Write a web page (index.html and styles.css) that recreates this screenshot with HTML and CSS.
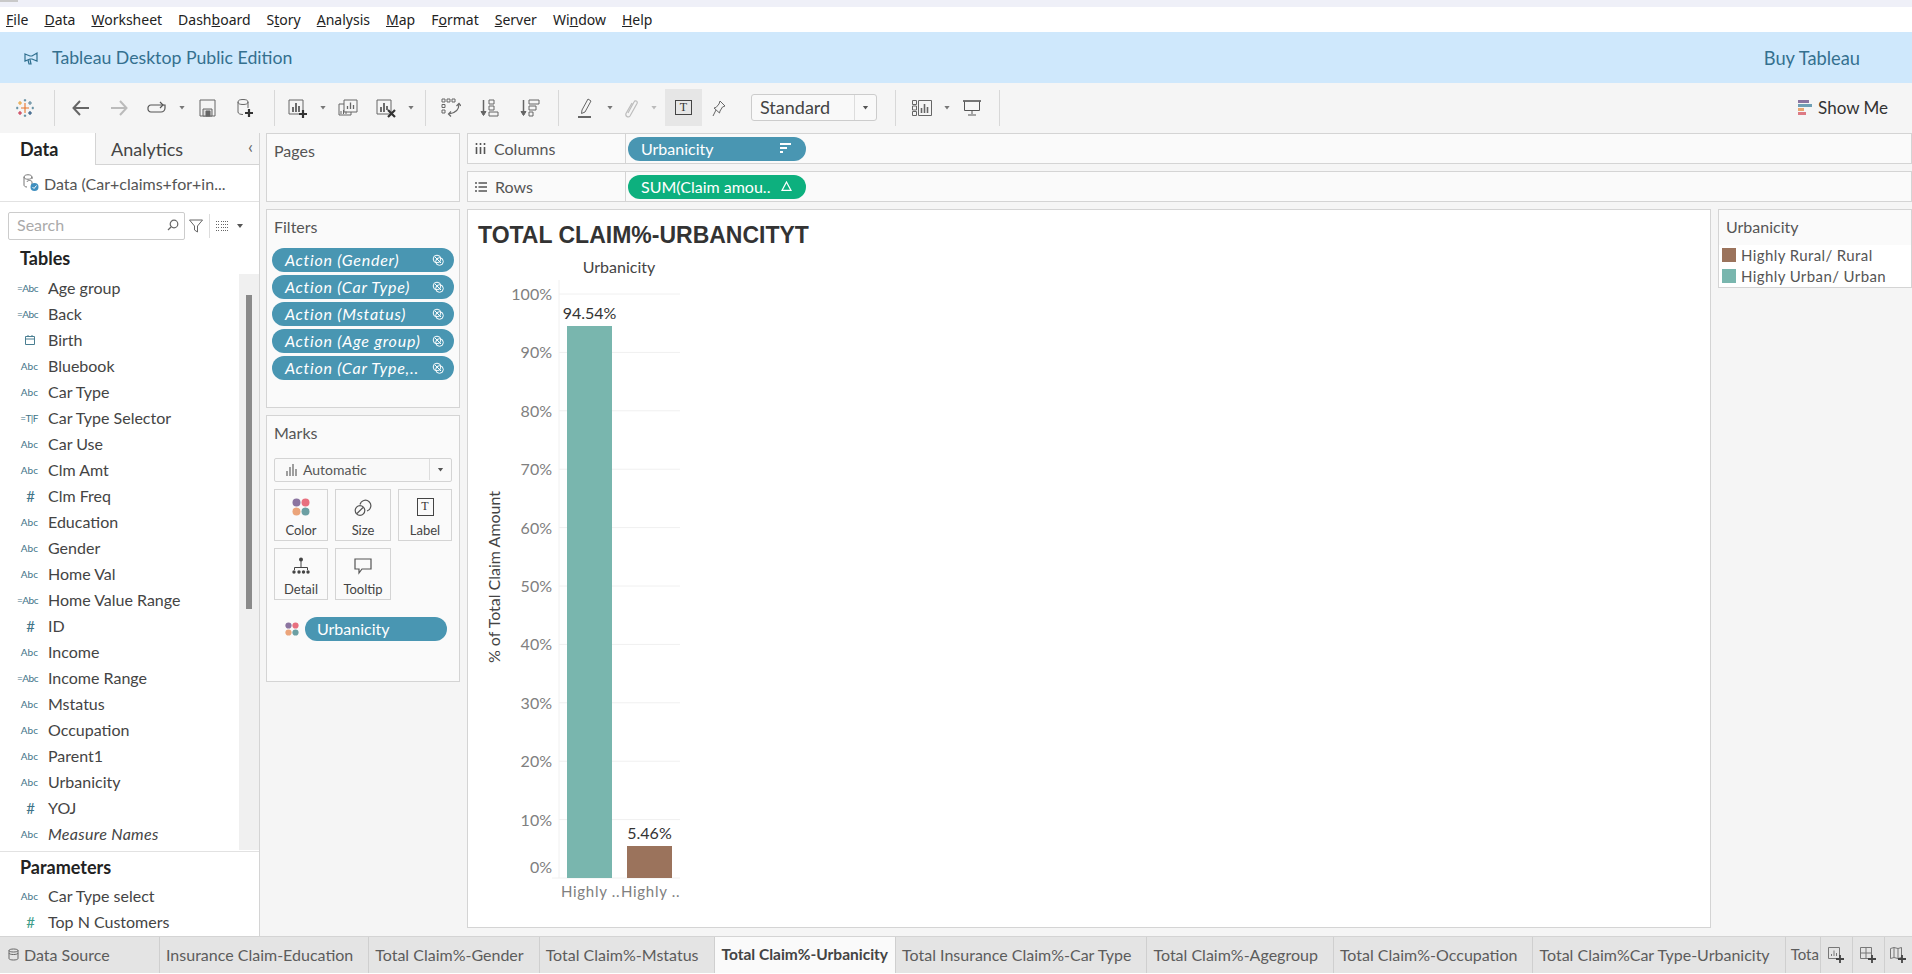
FILE: index.html
```html
<!DOCTYPE html>
<html>
  <head>
    <meta charset="UTF-8" />
    <title>Tableau Desktop Public Edition</title>
    <link rel="stylesheet" href="styles.css">
  </head>
  <body>
    <div class="top-strip"><span class="strip-block"></span></div>

    <!-- Menu -->
    <nav class="menu">
      <span><u>F</u>ile</span>
      <span><u>D</u>ata</span>
      <span><u>W</u>orksheet</span>
      <span>Dash<u>b</u>oard</span>
      <span>S<u>t</u>ory</span>
      <span><u>A</u>nalysis</span>
      <span><u>M</u>ap</span>
      <span>F<u>o</u>rmat</span>
      <span><u>S</u>erver</span>
      <span>Wi<u>n</u>dow</span>
      <span><u>H</u>elp</span>
    </nav>

    <!-- Banner -->
    <div class="banner">
      <svg class="megaphone" width="14" height="14" viewBox="0 0 14 14" fill="none" stroke="#2f6f8f" stroke-width="1.200"><path d="M1 3l5 2h2l5-3v8L8 8H6L1 10z"/><path d="M4 9l1 4h2L6 8.500"/></svg>
      <span>Tableau Desktop Public Edition</span>
      <span class="buy">Buy Tableau</span>
    </div>

    <!-- Toolbar -->
    <div class="toolbar">
      <div class="tool">
        <svg width="20" height="20" viewBox="0 0 20 20" fill="none" stroke-width="1.100">
          <path d="M10 5v10M6 10h8" stroke="#e8762b"/>
          <path d="M5 3v4M3 5h4" stroke="#e9a23b"/>
          <path d="M15 3v4M13 5h4" stroke="#5b879b"/>
          <path d="M5 13v4M3 15h4" stroke="#c72e4a"/>
          <path d="M15 13v4M13 15h4" stroke="#1f4e79"/>
          <path d="M10 1v2.400M8.800 2.200h2.400M10 16.600V19M8.800 17.800h2.400M1 10h2.400M2.200 8.800v2.400M16.600 10H19M17.800 8.800v2.400" stroke="#59879b"/>
        </svg>
      </div>
      <i class="sep sep-first"></i>
      <div class="tool"><svg width="20" height="18" viewBox="0 0 20 18" fill="none" stroke="#666" stroke-width="2"><path d="M18 9H3M9 2L2.500 9 9 16"/></svg></div>
      <div class="tool"><svg width="20" height="18" viewBox="0 0 20 18" fill="none" stroke="#bbb" stroke-width="2"><path d="M2 9h15M11 2l6.500 7L11 16"/></svg></div>
      <div class="tool"><svg width="20" height="14" viewBox="0 0 20 14" fill="none" stroke="#555" stroke-width="1.200"><path d="M4 4h14v3a4 4 0 0 1-4 4H4a3 3 0 0 1-3-3.500A3 3 0 0 1 4 4z"/><path d="M13 1l3 3-3 3"/></svg></div>
      <b class="caret"></b>
      <div class="tool"><svg width="17" height="18" viewBox="0 0 17 18" fill="none" stroke="#666"><path d="M1 1h15v16H1z"/><path d="M4 10h9v7H4z" fill="#ddd"/><path d="M7 12h4v5H7z" fill="#666"/></svg></div>
      <div class="tool"><svg width="18" height="20" viewBox="0 0 18 20" fill="none" stroke="#666"><path d="M2 4v10c0 1.500 2 2.500 5 2.500M12 4v6"/><ellipse cx="7" cy="4" rx="5" ry="2.500"/><path d="M13 11v8M9 15h8" stroke="#333" stroke-width="2.200"/></svg></div>
      <i class="sep sep-a"></i>
      <div class="tool"><svg width="20" height="20" viewBox="0 0 20 20" fill="none"><path d="M1 2h14v14H1z" stroke="#666"/><path d="M5 9v5M8 5v9M11 8v6" stroke="#555" stroke-width="1.700"/><path d="M15 12v8M11 16h8" stroke="#333" stroke-width="2.200"/></svg></div>
      <b class="caret"></b>
      <div class="tool"><svg width="20" height="18" viewBox="0 0 20 18" fill="none" stroke="#666"><path d="M6 5H1v11h12v-3"/><path d="M6 1h13v12H6z"/><path d="M9.500 10V7M12.500 10V3.500M15.500 10V6" stroke-width="1.300"/><path d="M3 15v-3M5.500 15v-4M8 15v-2.500" stroke-width="1"/></svg></div>
      <div class="tool"><svg width="20" height="20" viewBox="0 0 20 20" fill="none"><path d="M1 2h14v14H1z" stroke="#666"/><path d="M5 9v5M8 5v9M11 8v4" stroke="#555" stroke-width="1.700"/><path d="M12 12l7 7M19 12l-7 7" stroke="#333" stroke-width="2.200"/></svg></div>
      <b class="caret"></b>
      <i class="sep sep-b"></i>
      <div class="tool"><svg width="20" height="20" viewBox="0 0 20 20" fill="none" stroke="#666"><path d="M1 1h3v3H1zM6 1h3v3H6zM11 1h3v3h-3zM1 6.500h3v3H1zM1 12h3v3H1z"/><path d="M18 6c0 5-3 9-10 10" stroke-width="1.200"/><path d="M15.500 8L18 5.500 20 8M10 13.500L7.500 16l2.500 2.500" stroke-width="1.200"/></svg></div>
      <div class="tool tool-sort"><svg width="20" height="20" viewBox="0 0 20 20" fill="none" stroke="#666"><path d="M3.500 2v15" stroke-width="1.500"/><path d="M1 13.500l2.500 4 2.500-4z" fill="#666"/><path d="M9 2h5v4H9zM9 8h5v4H9zM9 14h9v4H9z"/></svg></div>
      <div class="tool tool-sort-desc"><svg width="20" height="20" viewBox="0 0 20 20" fill="none" stroke="#666"><path d="M3.500 2v15" stroke-width="1.500"/><path d="M1 13.500l2.500 4 2.500-4z" fill="#666"/><path d="M9 2h10v4H9zM9 8h7v4H9zM9 14h4v4H9z"/></svg></div>
      <i class="sep sep-c"></i>
      <div class="tool"><svg width="16" height="20" viewBox="0 0 16 20" fill="none" stroke="#666"><path d="M5 12l6-11 3 2-6 11-3.500 1.500z"/><path d="M1 19h13" stroke-width="2"/></svg></div>
      <b class="caret"></b>
      <div class="tool tool-clip"><svg width="14" height="20" viewBox="0 0 14 20" fill="none" stroke="#bdbdbd" stroke-width="1.200"><path d="M4 15l6-11c1-2 4-1 3 1.500L6 18c-1.500 2-5 .5-4-2.500L8 5"/></svg></div>
      <b class="caret caret-off"></b>
      <div class="tool tool-label">
        <span class="t-box">T</span>
      </div>
      <div class="tool tool-pin"><svg width="14" height="18" viewBox="0 0 14 18" fill="none" stroke="#666"><path d="M8 1l5 5-2.500 1L8 11 7.500 13 2 8l2-.5L7 4z" transform="translate(0 1)"/><path d="M4 11l-3 6"/></svg></div>
      <div class="fit-select">
        <span class="fit-value">Standard</span>
        <span class="fit-arrow"><b class="caret caret-dark"></b></span>
      </div>
      <i class="sep sep-d"></i>
      <div class="tool"><svg width="20" height="16" viewBox="0 0 20 16" fill="none" stroke="#666"><path d="M.5.500h4v4h-4zM.5 6h4v4h-4zM.5 11.500h4v4h-4zM6.500.5h13v15h-13z"/><path d="M9.500 13V8M12.500 13V4M15.500 13V7" stroke-width="1.600"/></svg></div>
      <b class="caret"></b>
      <div class="tool"><svg width="18" height="16" viewBox="0 0 18 16" fill="none" stroke="#555"><path d="M0 1h18" stroke-width="1.600"/><path d="M1.500 1.500v9h15v-9M9 10.500V14M5 15h8"/></svg></div>
      <i class="sep sep-e"></i>
      <div class="show-me">
        <svg width="14" height="15" viewBox="0 0 14 15"><rect width="11" height="3" fill="#8b74a0"/><rect y="4" width="14" height="3" fill="#6f9fb5"/><rect y="8" width="6" height="3" fill="#e7a671"/><rect y="12" width="8" height="3" fill="#dd7a84"/></svg>
        <span>Show Me</span>
      </div>
    </div>

    <div class="workspace">
      <!-- Data pane -->
      <aside class="data-pane">
        <div class="pane-tabs">
          <span class="pane-tab active">Data</span>
          <span class="pane-tab">Analytics<em class="collapse">‹</em></span>
        </div>
        <div class="source">
          <svg width="17" height="18" viewBox="0 0 17 18" fill="none" stroke="#777"><path d="M2 3c0-3 8-3 8 0s-8 3-8 0zM2 3v8c0 1 1 2 3 2M10 3v2M5 8c0-2 5-2 5 0v6"/><circle cx="12.500" cy="13" r="4" fill="#3f8fbf" stroke="none"/><path d="M10.500 13l1.500 1.500 2.500-3" stroke="#fff"/></svg>
          <span>Data (Car+claims+for+in...</span>
        </div>
        <div class="search-row">
          <div class="search-box">
            <span>Search</span>
            <svg width="12" height="12" viewBox="0 0 12 12" fill="none" stroke="#666" stroke-width="1.200"><circle cx="7" cy="5" r="3.800"/><path d="M4 8l-3 3"/></svg>
          </div>
          <svg class="funnel" width="14" height="14" viewBox="0 0 14 14" fill="none" stroke="#666"><path d="M.5 1h13L8.500 7v6l-3-2V7z"/></svg>
          <i class="search-sep"></i>
          <svg class="view-icon" width="13" height="10" viewBox="0 0 13 10" stroke="#666"><path d="M0 .5h4M5 .5h8M0 3.500h4M5 3.500h8M0 6.500h4M5 6.500h8M0 9.500h4M5 9.500h8" stroke-dasharray="1 1"/></svg>
          <b class="caret caret-dark"></b>
        </div>
        <h3 class="pane-heading">Tables</h3>
        <div class="fields-wrap">
          <ul class="fields">
            <li><b class="calc">=Abc</b>Age group</li>
            <li><b class="calc">=Abc</b>Back</li>
            <li><b class="cal"><svg width="10" height="10" viewBox="0 0 10 10" fill="none" stroke="#4a7f92"><path d="M.5 1.500h9v8h-9zM.5 4h9M3 0v2M7 0v2"/></svg></b>Birth</li>
            <li><b>Abc</b>Bluebook</li>
            <li><b>Abc</b>Car Type</li>
            <li><b class="calc">=T|F</b>Car Type Selector</li>
            <li><b>Abc</b>Car Use</li>
            <li><b>Abc</b>Clm Amt</li>
            <li><b class="num">#</b>Clm Freq</li>
            <li><b>Abc</b>Education</li>
            <li><b>Abc</b>Gender</li>
            <li><b>Abc</b>Home Val</li>
            <li><b class="calc">=Abc</b>Home Value Range</li>
            <li><b class="num">#</b>ID</li>
            <li><b>Abc</b>Income</li>
            <li><b class="calc">=Abc</b>Income Range</li>
            <li><b>Abc</b>Mstatus</li>
            <li><b>Abc</b>Occupation</li>
            <li><b>Abc</b>Parent1</li>
            <li><b>Abc</b>Urbanicity</li>
            <li><b class="num">#</b>YOJ</li>
            <li class="generated"><b>Abc</b>Measure Names</li>
          </ul>
          <div class="scroll-track"><div class="scroll-thumb"></div></div>
        </div>
        <h3 class="pane-heading params">Parameters</h3>
        <ul class="fields">
          <li><b>Abc</b>Car Type select</li>
          <li><b class="num green">#</b>Top N Customers</li>
        </ul>
      </aside>

      <!-- Pages, filters, marks -->
      <div class="cards">
        <section class="card pages"><h4>Pages</h4></section>
        <section class="card filters">
          <h4>Filters</h4>
          <div class="pill-stack">
            <div class="pill action">Action (Gender)<svg class="link" viewBox="0 0 12 12"><use href="#link"/></svg></div>
            <div class="pill action">Action (Car Type)<svg class="link" viewBox="0 0 12 12"><use href="#link"/></svg></div>
            <div class="pill action">Action (Mstatus)<svg class="link" viewBox="0 0 12 12"><use href="#link"/></svg></div>
            <div class="pill action">Action (Age group)<svg class="link" viewBox="0 0 12 12"><use href="#link"/></svg></div>
            <div class="pill action">Action (Car Type,..<svg class="link" viewBox="0 0 12 12"><use href="#link"/></svg></div>
          </div>
        </section>
        <section class="card marks">
          <h4>Marks</h4>
          <div class="mark-select">
            <span class="mark-type">
              <svg width="12" height="12" viewBox="0 0 12 12" stroke="#555" stroke-width="1.100"><path d="M1 12V7M4 12V3M7 12V0M10 12V5"/></svg>
              Automatic
            </span>
            <span class="mark-arrow"><b class="caret caret-dark"></b></span>
          </div>
          <div class="mark-grid">
            <div class="mark-btn">
              <svg width="18" height="18" viewBox="0 0 18 18"><circle cx="4.500" cy="4.500" r="4" fill="#8b74a0"/><circle cx="13.500" cy="4.500" r="4" fill="#e8707f"/><circle cx="4.500" cy="13.500" r="4" fill="#eba47a"/><circle cx="13.500" cy="13.500" r="4" fill="#6b9fa3"/></svg>
              <span>Color</span>
            </div>
            <div class="mark-btn">
              <svg width="18" height="18" viewBox="0 0 18 18" fill="none" stroke="#555" stroke-width="1.200"><circle cx="6" cy="12.500" r="4.800"/><path d="M3 15.500l6-6M6 6.500A5.500 5.500 0 1 1 13 13"/></svg>
              <span>Size</span>
            </div>
            <div class="mark-btn">
              <span class="t-box t-big">T</span>
              <span>Label</span>
            </div>
            <div class="mark-btn">
              <svg width="18" height="18" viewBox="0 0 18 18" fill="#444" stroke="#444"><circle cx="9" cy="2.500" r="2" stroke="none"/><path d="M9 3v7M2.500 13v-2.500h13V13" fill="none"/><circle cx="2" cy="15" r="1.700" stroke="none"/><circle cx="7" cy="15" r="1.700" stroke="none"/><circle cx="11.500" cy="15" r="1.700" stroke="none"/><circle cx="16" cy="15" r="1.700" stroke="none"/></svg>
              <span>Detail</span>
            </div>
            <div class="mark-btn">
              <svg width="18" height="16" viewBox="0 0 18 16" fill="none" stroke="#555" stroke-width="1.200"><path d="M1 1h16v10H8l-3 4v-4H1z"/></svg>
              <span>Tooltip</span>
            </div>
          </div>
          <div class="mark-row">
            <svg width="14" height="14" viewBox="0 0 18 18"><circle cx="4.500" cy="4.500" r="4" fill="#8b74a0"/><circle cx="13.500" cy="4.500" r="4" fill="#e8707f"/><circle cx="4.500" cy="13.500" r="4" fill="#eba47a"/><circle cx="13.500" cy="13.500" r="4" fill="#6b9fa3"/></svg>
            <div class="pill mark-pill">Urbanicity</div>
          </div>
        </section>
      </div>

      <!-- Shelves and view -->
      <div class="view-col">
        <div class="shelf">
          <div class="shelf-label">
            <svg width="11" height="11" viewBox="0 0 11 11" stroke="#555" stroke-width="1.600"><path d="M1.500 4v7M5.500 4v7M9.500 4v7M1.500 0v2M5.500 0v2M9.500 0v2"/></svg>
            Columns
          </div>
          <div class="pill dim">Urbanicity
            <svg width="12" height="10" viewBox="0 0 12 10" stroke="#fff" stroke-width="1.800"><path d="M0 1h11M0 5h7M0 9h3"/></svg>
          </div>
        </div>
        <div class="shelf">
          <div class="shelf-label">
            <svg width="12" height="10" viewBox="0 0 12 10" stroke="#555" stroke-width="1.400"><path d="M0 1h2M3.500 1H12M0 5h2M3.500 5H12M0 9h2M3.500 9H12"/></svg>
            Rows
          </div>
          <div class="pill measure">SUM(Claim amou..
            <svg width="11" height="10" viewBox="0 0 11 10" fill="none" stroke="#fff" stroke-width="1.200"><path d="M5.500 1L10 9.400H1z"/></svg>
          </div>
        </div>
        <div class="view-row">
          <div class="canvas">
            <h2 class="viz-title">TOTAL CLAIM%-URBANCITYT</h2>
            <svg class="chart" width="320" height="700" viewBox="467 210 320 700">
              <g class="grid-lines">
                <path d="M559 294H680M559 352.400H680M559 410.800H680M559 469.200H680M559 527.600H680M559 586H680M559 644.400H680M559 702.800H680M559 761.200H680M559 819.600H680M552 878H680M559 280V878"/>
              </g>
              <text class="col-head" x="619" y="273" text-anchor="middle">Urbanicity</text>
              <g class="axis" text-anchor="end">
                <text x="552" y="300">100%</text>
                <text x="552" y="358">90%</text>
                <text x="552" y="417">80%</text>
                <text x="552" y="475">70%</text>
                <text x="552" y="534">60%</text>
                <text x="552" y="592">50%</text>
                <text x="552" y="650">40%</text>
                <text x="552" y="709">30%</text>
                <text x="552" y="767">20%</text>
                <text x="552" y="826">10%</text>
                <text x="552" y="873">0%</text>
              </g>
              <text class="axis-title" transform="translate(500 577) rotate(-90)" text-anchor="middle">% of Total Claim Amount</text>
              <rect x="567" y="326" width="45" height="552" fill="#79b6ae"/>
              <rect x="627" y="846" width="45" height="32" fill="#9b735c"/>
              <text class="value" x="589.500" y="319" text-anchor="middle">94.54%</text>
              <text class="value" x="649.500" y="839" text-anchor="middle">5.46%</text>
              <text class="axis spaced" x="561" y="897">Highly ..</text>
              <text class="axis spaced" x="621" y="897">Highly ..</text>
            </svg>
          </div>
          <div class="legend">
            <div class="legend-head">Urbanicity</div>
            <div class="legend-item"><i class="swatch rural"></i>Highly Rural/ Rural</div>
            <div class="legend-item"><i class="swatch urban"></i>Highly Urban/ Urban</div>
          </div>
        </div>
      </div>
    </div>

    <!-- Sheet tabs -->
    <div class="sheet-tabs">
      <div class="sheet source-tab">
        <svg width="11" height="13" viewBox="0 0 11 13" fill="none" stroke="#666"><path d="M1 2.500v8c0 2 9 2 9 0v-8M1 2.500c0-2 9-2 9 0s-9 2-9 0zM1 5c0 2 9 2 9 0"/></svg>
        Data Source
      </div>
      <div class="sheet">Insurance Claim-Education</div>
      <div class="sheet">Total Claim%-Gender</div>
      <div class="sheet">Total Claim%-Mstatus</div>
      <div class="sheet current">Total Claim%-Urbanicity</div>
      <div class="sheet">Total Insurance Claim%-Car Type</div>
      <div class="sheet">Total Claim%-Agegroup</div>
      <div class="sheet">Total Claim%-Occupation</div>
      <div class="sheet">Total Claim%Car Type-Urbanicity</div>
      <div class="sheet clipped">Tota</div>
      <div class="sheet-add">
        <svg width="17" height="16" viewBox="0 0 17 16" fill="none"><path d="M.5.500h11v11H.5z" stroke="#777"/><path d="M3.500 9V7M6 9V3.500M8.500 9V6" stroke="#777"/><path d="M12 8v8M8 12h8" stroke="#444" stroke-width="1.800"/></svg>
      </div>
      <div class="sheet-add">
        <svg width="17" height="16" viewBox="0 0 17 16" fill="none"><path d="M.5.500h11v11H.5zM.5 6h11M6 .5v11" stroke="#777"/><path d="M12 8v8M8 12h8" stroke="#444" stroke-width="1.800"/></svg>
      </div>
      <div class="sheet-add">
        <svg width="17" height="16" viewBox="0 0 17 16" fill="none"><path d="M.5 1.500L4 .5l4 1 3.500-1v10l-3.500 1-4-1-3.500 1zM4 .5v10M8 1.500v10" stroke="#777"/><path d="M12 8v8M8 12h8" stroke="#444" stroke-width="1.800"/></svg>
      </div>
    </div>

    <svg class="defs" width="0" height="0">
      <symbol id="link" viewBox="0 0 12 12">
        <g fill="none" stroke="#fff" stroke-width="1"><circle cx="5" cy="5" r="3.800"/><circle cx="7.500" cy="7.500" r="3.800"/><path d="M3 3l6 6"/></g>
      </symbol>
    </svg>
  </body>
</html>
```

FILE: styles.css
```css
* {
  box-sizing: border-box;
}
body {
  margin: 0;
  width: 1912px;
  height: 974px;
  overflow: hidden;
  background: #f5f5f5;
  color: #444;
  font-family: Lato, sans-serif;
  font-size: 16px;
  display: flex;
  flex-direction: column;
}
h2,
h3,
h4,
ul {
  margin: 0;
  padding: 0;
}
.defs {
  position: absolute;
}

/* top of window */
.top-strip {
  height: 7px;
  background: #eff0f8;
}
.strip-block {
  display: block;
  width: 18px;
  height: 2px;
  background: #c9c9c9;
}
.menu {
  height: 25px;
  background: #fff;
  display: flex;
  gap: 16px;
  align-items: center;
  padding-left: 6px;
  color: #222;
  font-family: "Noto Sans", sans-serif;
  font-size: 14px;
}
.banner {
  height: 51px;
  background: #cfe8fc;
  color: #34708f;
  font-size: 17.700px;
  display: flex;
  align-items: center;
  padding-left: 24px;
}
.megaphone {
  margin-right: 14px;
}
.buy {
  margin-left: auto;
  margin-right: 52px;
  font-size: 18.300px;
}

/* toolbar */
.toolbar {
  height: 50px;
  padding: 0 0 1px 6px;
  display: flex;
  align-items: center;
}
.tool {
  width: 38px;
  height: 37px;
  display: flex;
  align-items: center;
  justify-content: center;
  flex: none;
}
.tool-sort {
  margin-left: 1px;
}
.tool-sort-desc {
  margin-left: 2px;
}
.tool-clip {
  width: 30px;
}
.tool-label {
  width: 37px;
  margin-left: 5px;
  background: #e6e6e6;
}
.tool-pin {
  width: 34px;
}
.caret {
  display: block;
  flex: none;
  width: 12px;
  height: 4px;
  background: #777;
  clip-path: polygon(3px 0, 9px 0, 6px 4px);
}
.caret-off {
  margin-left: 2px;
  background: #bbb;
}
.caret-dark {
  background: #555;
}
.sep {
  flex: none;
  display: block;
  width: 1px;
  height: 36px;
  background: #d8d8d8;
}
.sep-first {
  margin: 0 7px 0 10px;
}
.sep-a {
  margin: 0 4px 0 10px;
}
.sep-b {
  margin: 0 6px 0 8px;
}
.sep-c {
  margin: 0 7px 0 9px;
}
.sep-d {
  margin: 0 7px 0 18px;
}
.sep-e {
  margin-left: 8px;
}
.t-box {
  display: block;
  width: 17px;
  height: 15px;
  border: 1px solid #444;
  background: #f5f5f5;
  color: #333;
  font-family: "Liberation Serif", serif;
  font-size: 12px;
  line-height: 13px;
  text-align: center;
}
.tool-label .t-box {
  background: none;
}
.t-big {
  height: 16px;
  background: none;
  line-height: 14px;
}
.fit-select {
  flex: none;
  width: 126px;
  height: 27px;
  margin-left: 15px;
  background: #f9f9f9;
  border: 1px solid #ccc;
  border-radius: 3px;
  display: flex;
  align-items: center;
  font-size: 18px;
}
.fit-value {
  flex: 1;
  padding: 0 0 2px 8px;
}
.fit-arrow {
  width: 22px;
  height: 100%;
  border-left: 1px solid #ddd;
  display: flex;
  align-items: center;
  justify-content: center;
}
.show-me {
  margin-left: auto;
  margin-right: 24px;
  display: flex;
  align-items: center;
  gap: 6px;
  font-size: 17px;
  color: #333;
}

/* main area */
.workspace {
  flex: 1;
  min-height: 0;
  display: flex;
}
.data-pane {
  width: 260px;
  flex: none;
  background: #fff;
  border-right: 1px solid #d4d4d4;
}
.pane-tabs {
  display: flex;
  height: 32px;
  background: #f5f5f5;
}
.pane-tab {
  flex: 1;
  padding: 1px 0 0 15px;
  font-size: 18px;
  line-height: 31px;
  border-bottom: 1px solid #d4d4d4;
  position: relative;
}
.pane-tab.active {
  flex: none;
  width: 96px;
  padding-left: 20px;
  background: #fff;
  color: #222;
  font-weight: 700;
  border-bottom: 0;
  border-right: 1px solid #d4d4d4;
}
.collapse {
  position: absolute;
  right: 6px;
  top: -2px;
  font-style: normal;
  color: #666;
}
.source {
  height: 37px;
  display: flex;
  align-items: center;
  gap: 5px;
  padding-left: 22px;
  border-bottom: 1px solid #e2e2e2;
  color: #555;
}
.search-row {
  height: 28px;
  margin-top: 10px;
  padding-left: 8px;
  display: flex;
  align-items: center;
}
.search-box {
  width: 177px;
  height: 28px;
  border: 1px solid #ccc;
  border-radius: 2px;
  padding: 0 5px 3px 8px;
  display: flex;
  align-items: center;
  justify-content: space-between;
  color: #aaa;
}
.funnel {
  margin-left: 4px;
}
.search-sep {
  width: 1px;
  height: 24px;
  background: #ddd;
  margin: 0 6px;
}
.view-icon {
  margin-right: 5px;
}
.pane-heading {
  height: 34px;
  padding-left: 20px;
  color: #222;
  font-size: 18px;
  line-height: 36px;
}
.fields-wrap {
  display: flex;
  height: 576px;
}
.fields {
  flex: 1;
  list-style: none;
}
.fields li {
  height: 26px;
  padding-bottom: 1px;
  display: flex;
  align-items: center;
  white-space: nowrap;
  color: #444;
}
.fields-wrap .fields {
  padding-top: 1px;
}
.fields li.generated {
  font-style: italic;
  letter-spacing: 0.3px;
}
.fields b {
  width: 48px;
  padding-right: 10px;
  flex: none;
  text-align: right;
  color: #3f7488;
  font-size: 10px;
  font-weight: 400;
  font-style: normal;
  letter-spacing: 0;
}
.fields b.calc {
  letter-spacing: -0.5px;
}
.fields b.num {
  font-size: 15px;
  padding-right: 13px;
}
.fields b.green {
  color: #3f9d8a;
}
.fields b.cal {
  display: flex;
  justify-content: flex-end;
  padding-right: 13px;
}
.scroll-track {
  width: 20px;
  flex: none;
  background: #f0f0f0;
  padding: 21px 7px 0;
}
.scroll-thumb {
  height: 314px;
  background: #8a8a8a;
}
.params {
  border-top: 1px solid #e2e2e2;
  margin-top: 1px;
  height: 32px;
  line-height: 30px;
}

/* cards */
.cards {
  width: 194px;
  flex: none;
  margin-left: 6px;
  display: flex;
  flex-direction: column;
  gap: 7px;
}
.card {
  background: #fafafa;
  border: 1px solid #d4d4d4;
}
.card h4 {
  height: 36px;
  padding: 7px 0 0 7px;
  font-size: 16px;
  font-weight: 400;
  color: #555;
}
.pages {
  height: 69px;
}
.filters {
  height: 199px;
}
.marks {
  height: 267px;
}
.pill {
  height: 24px;
  border-radius: 12px;
  color: #fff;
  display: flex;
  align-items: center;
  justify-content: space-between;
  padding: 0 10px 1px 13px;
  background: #4996b2;
  white-space: nowrap;
}
.pill-stack {
  margin: 2px 5px 0;
  display: flex;
  flex-direction: column;
  gap: 3px;
}
.action {
  font-style: italic;
  letter-spacing: 0.75px;
}
.link {
  width: 12px;
  height: 12px;
  flex: none;
}
.mark-select {
  margin: 6px 7px 0;
  height: 24px;
  padding-bottom: 1px;
  background: #f9f9f9;
  border: 1px solid #d4d4d4;
  border-radius: 2px;
  display: flex;
  align-items: center;
  font-size: 14px;
  color: #555;
}
.mark-type {
  flex: 1;
  padding-left: 11px;
  display: flex;
  align-items: center;
  gap: 5px;
}
.mark-arrow {
  width: 22px;
  height: 100%;
  border-left: 1px solid #ddd;
  display: flex;
  align-items: center;
  justify-content: center;
}
.mark-grid {
  margin: 7px 7px 0;
  display: grid;
  grid-template-columns: 54px 56px 54px;
  grid-auto-rows: 52px;
  gap: 7px;
}
.mark-btn {
  border: 1px solid #d4d4d4;
  display: flex;
  flex-direction: column;
  align-items: center;
  gap: 6px;
  padding-top: 8px;
  font-size: 13px;
  color: #444;
}
.mark-btn > svg,
.mark-btn > .t-box {
  height: 18px;
  flex: none;
}
.mark-row {
  margin: 17px 12px 0 18px;
  display: flex;
  align-items: center;
  gap: 6px;
}
.mark-pill {
  flex: 1;
  padding-left: 12px;
}

/* shelves */
.view-col {
  flex: 1;
  min-width: 0;
  margin-left: 7px;
  display: flex;
  flex-direction: column;
}
.shelf {
  height: 31px;
  margin-bottom: 7px;
  background: #fafafa;
  border: 1px solid #d4d4d4;
  display: flex;
  align-items: center;
}
.shelf-label {
  width: 158px;
  height: 100%;
  border-right: 1px solid #d4d4d4;
  padding-left: 7px;
  margin-right: 2px;
  display: flex;
  align-items: center;
  gap: 8px;
  color: #555;
}
.shelf .pill {
  width: 178px;
  padding-right: 14px;
}
.shelf .pill.measure {
  background: #0db07e;
}
.view-row {
  flex: 1;
  min-height: 0;
  display: flex;
  gap: 7px;
  padding-bottom: 8px;
}
.canvas {
  width: 1244px;
  background: #fff;
  border: 1px solid #d4d4d4;
  position: relative;
  overflow: hidden;
}
.viz-title {
  position: absolute;
  left: 10px;
  top: 12px;
  font-family: "Liberation Sans", sans-serif;
  font-size: 23px;
  font-weight: 700;
  color: #333;
  white-space: nowrap;
}
.chart {
  display: block;
  margin: 0 0 0 -1px;
  font-family: Lato, sans-serif;
}
.grid-lines path {
  fill: none;
  stroke: #f0f0f0;
}
.col-head {
  font-size: 16px;
  fill: #444;
}
.axis,
.axis text {
  font-size: 16px;
  fill: #808080;
}
.spaced {
  font-size: 15px;
  letter-spacing: 0.7px;
}
.axis-title {
  font-size: 16px;
  fill: #444;
}
.value {
  font-size: 16px;
  fill: #333;
}
.legend {
  flex: 1;
  height: 79px;
  background: #fff;
  border: 1px solid #d4d4d4;
  font-size: 15px;
}
.legend-head {
  height: 35px;
  padding: 7px 0 0 7px;
  background: #fafafa;
  font-size: 16px;
  color: #555;
}
.legend-item {
  height: 21px;
  display: flex;
  align-items: center;
  gap: 5px;
  padding: 0 0 2px 3px;
  letter-spacing: 0.4px;
  color: #555;
}
.swatch {
  width: 14px;
  height: 14px;
}
.rural {
  background: #9b735c;
}
.urban {
  background: #79b6ae;
}

/* sheet tabs */
.sheet-tabs {
  height: 38px;
  flex: none;
  background: #fff;
  border-top: 1px solid #d4d4d4;
  display: flex;
  overflow: hidden;
}
.sheet {
  height: 36px;
  flex: none;
  background: #e4e4e4;
  border-right: 1px solid #cfcfcf;
  padding: 0 15px 2px 6px;
  display: flex;
  align-items: center;
  gap: 5px;
  color: #5c5c5c;
  white-space: nowrap;
}
.source-tab {
  width: 160px;
  padding: 0 0 2px 8px;
}
.current {
  background: #fafafa;
  color: #444;
  font-size: 15.500px;
  font-weight: 700;
  padding: 0 7px 2px;
}
.clipped {
  flex: 1 1 0;
  min-width: 0;
  padding: 0 0 2px 5px;
  font-size: 15px;
}
.sheet-add {
  width: 32px;
  height: 36px;
  flex: none;
  background: #e4e4e4;
  border-right: 1px solid #cfcfcf;
  display: flex;
  align-items: center;
  justify-content: center;
}
.sheet-add:last-child {
  width: 27px;
  border-right: 0;
}
```
